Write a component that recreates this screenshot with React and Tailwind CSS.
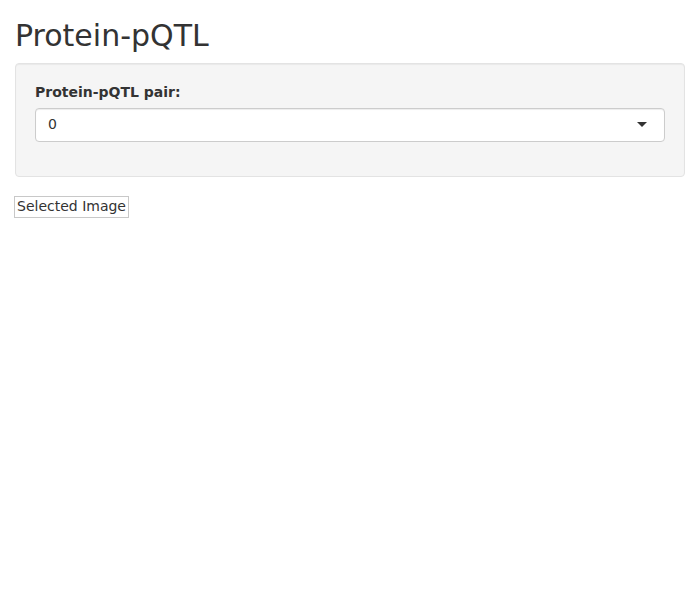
import React from 'react';

export default function App() {
  return (
    <div className="min-h-[597px] bg-white px-[15px] text-[14px] leading-[20px] text-[#333333]" style={{ fontFamily: '"DejaVu Sans", Verdana, sans-serif' }}>
      <h2 className="mt-[19px] mb-[11px] text-[30px] leading-[33px] font-normal">Protein-pQTL</h2>

      <div className="mb-[20px] rounded-[4px] border border-[#e3e3e3] bg-[#f5f5f5] p-[19px] shadow-[inset_0_1px_1px_rgba(0,0,0,0.05)]">
        <div className="mb-[15px]">
          <label className="mb-[5px] block font-bold leading-[18px] pb-[2px]">Protein-pQTL pair:</label>
          <div className="relative flex h-[34px] items-center rounded-[4px] border border-[#cccccc] bg-white px-[12px] pb-[2px] shadow-[inset_0_1px_1px_rgba(0,0,0,0.075)]">
            <span>0</span>
            <span className="absolute right-[17px] top-[13px] h-0 w-0 border-x-[5px] border-t-[5px] border-x-transparent border-t-[#333333]" />
          </div>
        </div>
      </div>

      <div className="-mt-[1px]">
        <span className="-ml-[1px] inline-block border border-[#c8c8c8] px-[2px] pb-[2px] leading-[18px]">Selected Image</span>
      </div>
    </div>
  );
}
